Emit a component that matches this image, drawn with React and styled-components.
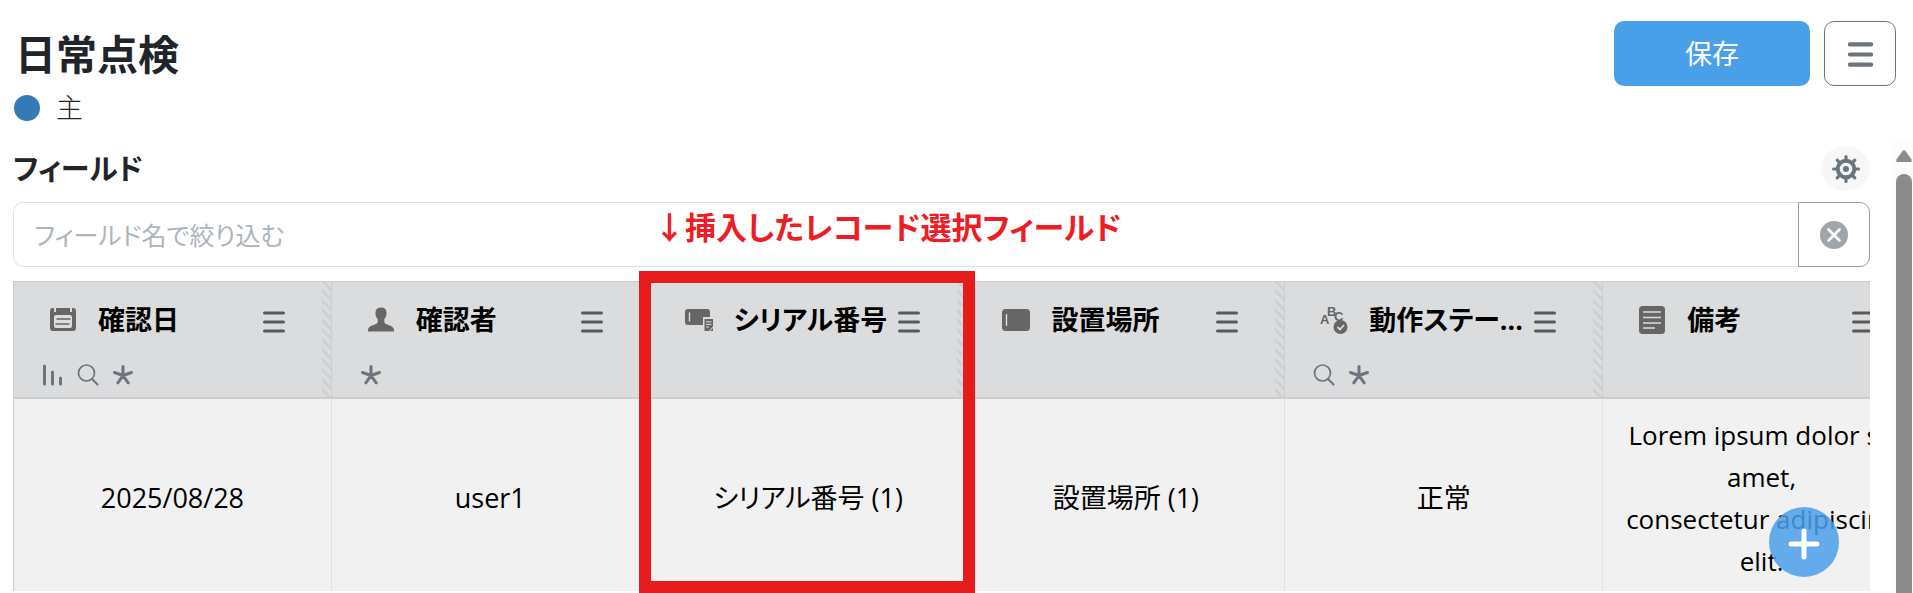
import React, { useState } from "react";
import styled, { createGlobalStyle } from "styled-components";

const GlobalStyle = createGlobalStyle`
  *{
    box-sizing: border-box;
  }
  body{
    margin: 0;
    background: #fff;
    color: #212529;
    font-family: "Open Sans", "Noto Sans CJK JP", sans-serif;
    font-size: 27px;
    line-height: 42px;
    font-feature-settings: "palt";
  }
  button, input{
    font: inherit;
    font-feature-settings: inherit;
  }
  svg{
    flex: none;
  }
`;

const MenuIcon = ({ size, stroke }) => (
  <svg width={size} height={size} viewBox="0 0 24 24" fill="none" stroke="currentColor" strokeWidth={stroke} strokeLinecap="round">
    <path d="M2.500 3h19M2.500 12h19M2.500 21h19" />
  </svg>
);

const GearIcon = () => (
  <svg width="28" height="28" viewBox="0 0 28 28" fill="none" stroke="currentColor" strokeLinecap="round">
    <circle cx="14" cy="14" r="8.300" strokeWidth="4" />
    <circle cx="14" cy="14" r="3" fill="currentColor" stroke="none" />
    <path strokeWidth="3.200" d="M14 1.600v4M14 22.400v4M1.600 14h4M22.400 14h4M5.200 5.200l2.600 2.600M20.200 20.200l2.600 2.600M5.200 22.800l2.600-2.600M20.200 7.800l2.600-2.600" />
  </svg>
);

const ClearIcon = () => (
  <svg width="28" height="28" viewBox="0 0 28 28">
    <circle cx="14" cy="14" r="14" fill="#a0a4ab" />
    <path d="M8.500 8.500l11 11M19.500 8.500l-11 11" stroke="#fff" strokeWidth="2.600" strokeLinecap="round" />
  </svg>
);

const PlusIcon = () => (
  <svg width="32" height="32" viewBox="0 0 32 32">
    <path d="M16 3v26M3 16h26" stroke="#fff" strokeWidth="5" strokeLinecap="round" />
  </svg>
);

/* field type icons */
const DateIcon = () => (
  <svg width="28" height="28" viewBox="0 0 28 28">
    <path fill="#666" d="M4 2h1v4h2V2h14v4h2V2h1a3 3 0 0 1 3 3v17a3 3 0 0 1-3 3H4a3 3 0 0 1-3-3V5a3 3 0 0 1 3-3z" />
    <rect x="5" y="9" width="18" height="13" rx="2" fill="#dbdcde" />
    <path d="M8 13h13M7 18h13" stroke="#666" strokeWidth="1.400" strokeLinecap="round" />
  </svg>
);

const UserIcon = () => (
  <svg width="28" height="28" viewBox="0 0 28 28">
    <path fill="#666" d="M14 1.500c3.500 0 5.400 2 5.400 4.500 0 1 .5 2-.1 3-.3 2-1 3-2 4v2.500c0 2 1.500 2.500 4 3.500 3.500 1 5.700 2.500 5.700 5v1.500H1V24c0-2.500 2.200-4 5.700-5 2.500-1 4-1.500 4-3.500V13c-1-1-1.700-2-2-4-.6-1-.1-2-.1-3 0-2.500 1.900-4.500 5.400-4.500z" />
  </svg>
);

const RecordIcon = () => (
  <svg width="28" height="28" viewBox="0 0 28 28">
    <path fill="#666" d="M3 3h19a3 3 0 0 1 3 3v5h-7v8H3a3 3 0 0 1-3-3V6a3 3 0 0 1 3-3z" />
    <path d="M4.500 6.500v9" stroke="#dbdcde" strokeWidth="1.400" />
    <path fill="#666" d="M19.500 13h8.500v7.500l-4 4.500h-4.500z" />
    <path d="M21 15.800h5.500M21 18.400h5.500M21 21h3" stroke="#dbdcde" strokeWidth="1" />
    <path fill="#666" d="M28 22v3h-3z" />
  </svg>
);

const TextIcon = () => (
  <svg width="28" height="28" viewBox="0 0 28 28">
    <rect y="3" width="28" height="22" rx="3.500" fill="#666" />
    <path d="M4.500 8v12" stroke="#dbdcde" strokeWidth="1.400" />
  </svg>
);

const ChoiceIcon = () => (
  <svg width="28" height="28" viewBox="0 0 28 28">
    <g fill="#666" fontFamily="Liberation Sans" fontWeight="700">
      <text x="0" y="18" fontSize="13">A</text>
      <text x="7" y="9.500" fontSize="13">B</text>
      <text x="14" y="14.500" fontSize="13">C</text>
    </g>
    <circle cx="20.500" cy="21" r="7" fill="#666" />
    <path d="M17.500 21l2.500 2.500 4-4.500" fill="none" stroke="#dbdcde" strokeWidth="1.800" />
  </svg>
);

const MemoIcon = () => (
  <svg width="28" height="28" viewBox="0 0 28 28">
    <rect x="1" width="26" height="28" rx="3.500" fill="#666" />
    <path d="M5 6h18M5 11.500h18M5 17h18M5 22h12" stroke="#dbdcde" strokeWidth="1.700" />
  </svg>
);

/* option icons under the field name */
const SortIcon = () => (
  <svg width="22" height="22" viewBox="0 0 22 22" stroke="currentColor" strokeWidth="3" strokeLinecap="round">
    <path d="M2.500 2v18M10.500 8v12M18.500 14v6" />
  </svg>
);

const SearchIcon = () => (
  <svg width="22" height="22" viewBox="0 0 22 22" fill="none" stroke="currentColor" strokeWidth="1.700" strokeLinecap="round">
    <circle cx="9.500" cy="9" r="8" />
    <path d="M15 15l5.500 5.500" strokeWidth="2" />
  </svg>
);

const RequiredIcon = () => (
  <svg width="22" height="22" viewBox="0 0 22 22" stroke="currentColor" strokeWidth="3" strokeLinecap="round">
    <path d="M11 11.500V2.500M11 11.500L2.500 8.500M11 11.500l8.500-3M11 11.500L5.800 18.800M11 11.500l5.200 7.300" />
  </svg>
);

const options = { sort: SortIcon, search: SearchIcon, required: RequiredIcon };

const fields = [
  { name: "確認日", icon: DateIcon, options: ["sort", "search", "required"], value: "2025/08/28" },
  { name: "確認者", icon: UserIcon, options: ["required"], value: "user1" },
  { name: "シリアル番号", icon: RecordIcon, options: [], value: "シリアル番号 (1)" },
  { name: "設置場所", icon: TextIcon, options: [], value: "設置場所 (1)" },
  { name: "動作ステー...", icon: ChoiceIcon, options: ["search", "required"], value: "正常" },
  { name: "備考", icon: MemoIcon, options: [], value: "Lorem ipsum dolor sit amet,\nconsectetur adipiscing elit.", memo: true },
];

const App = () => {
  const [keyword, setKeyword] = useState("");

  return (
    <Page>
      <GlobalStyle />
      <Header>
        <TitleBlock>
          <Title>日常点検</Title>
          <Status><Dot />主</Status>
        </TitleBlock>
        <SaveButton type="button">保存</SaveButton>
        <MenuButton type="button" aria-label="メニュー"><MenuIcon size={27} stroke={3.6} /></MenuButton>
      </Header>
      <Body>
        <Main>
          <SectionHead>
            <SectionTitle>フィールド</SectionTitle>
            <GearButton type="button" aria-label="設定"><GearIcon /></GearButton>
          </SectionHead>
          <SearchBar>
            <SearchInput
              type="text"
              aria-label="フィールド名で絞り込む"
              placeholder="フィールド名で絞り込む"
              value={keyword}
              onChange={(e) => setKeyword(e.target.value)}
            />
            <ClearButton type="button" aria-label="クリア" onClick={() => setKeyword("")}><ClearIcon /></ClearButton>
          </SearchBar>
          <TableArea>
            <Table>
              <thead>
                <tr>
                  {fields.map((field) => (
                    <HeadCell key={field.name}>
                      <HeadInner>
                        <FieldName>
                          <field.icon />
                          <span>{field.name}</span>
                          <FieldMenu type="button" aria-label="フィールドメニュー"><MenuIcon size={24} stroke={3} /></FieldMenu>
                        </FieldName>
                        <FieldOptions>
                          {field.options.map((key) => {
                            const Icon = options[key];
                            return <Icon key={key} />;
                          })}
                        </FieldOptions>
                        <ResizeHandle />
                      </HeadInner>
                    </HeadCell>
                  ))}
                </tr>
              </thead>
              <tbody>
                <tr>
                  {fields.map((field) => (
                    <Cell key={field.name} $memo={field.memo}>{field.value}</Cell>
                  ))}
                </tr>
              </tbody>
            </Table>
          </TableArea>
          <NoteText>↓挿入したレコード選択フィールド</NoteText>
          <NoteFrame />
          <AddButton type="button" aria-label="追加"><PlusIcon /></AddButton>
        </Main>
        <ScrollBar>
          <svg width="16" height="12" viewBox="0 0 16 12">
            <path fill="#8b8b8b" d="M6.500 1a2 2 0 0 1 3 0l6 8.500a1.600 1.600 0 0 1-1.300 2.500H1.800A1.600 1.600 0 0 1 .5 9.500z" />
          </svg>
          <ScrollThumb />
        </ScrollBar>
      </Body>
    </Page>
  );
};

export default App;

const Page = styled.div`
  display: flex;
  flex-direction: column;
  height: 100vh;
  overflow: hidden;
`;

const Header = styled.header`
  display: flex;
  align-items: flex-start;
  gap: 14px;
  padding: 21px 17px 13px 13px;
`;

const TitleBlock = styled.div`
  flex: 1;
  padding-top: 8px;
`;

const Title = styled.h1`
  margin: 0 0 8px;
  padding-left: 2px;
  font-size: 41px;
  font-weight: 700;
  line-height: 50px;
`;

const Status = styled.div`
  display: flex;
  align-items: center;
  gap: 16px;
  font-weight: 300;
`;

const Dot = styled.span`
  width: 26px;
  height: 26px;
  margin-left: 1px;
  border-radius: 50%;
  background: #337ab7;
`;

const SaveButton = styled.button`
  width: 196px;
  height: 65px;
  padding: 0;
  border: 0;
  border-radius: 10px;
  background: #4a9fe9;
  color: #fff;
`;

const MenuButton = styled.button`
  display: flex;
  align-items: center;
  justify-content: center;
  width: 72px;
  height: 65px;
  padding: 2px 0 0;
  border: 1px solid #6c757d;
  border-radius: 10px;
  background: #fff;
  color: #6c757d;
`;

const Body = styled.div`
  display: flex;
  flex: 1;
  min-height: 0;
`;

const Main = styled.main`
  position: relative;
  display: flex;
  flex-direction: column;
  flex: 1;
  min-width: 0;
  padding: 0 21px 2px 13px;
`;

const SectionHead = styled.div`
  display: flex;
  align-items: center;
  justify-content: space-between;
  flex: none;
  height: 60px;
  padding-bottom: 7px;
`;

const SectionTitle = styled.h2`
  margin: 0;
  font-size: 29px;
  font-weight: 700;
`;

const GearButton = styled.button`
  display: flex;
  align-items: center;
  justify-content: center;
  width: 49px;
  height: 45px;
  padding: 0;
  border: 0;
  border-radius: 50%;
  background: #f7f7f7;
  color: #6c757d;
`;

const SearchBar = styled.div`
  display: flex;
  flex: none;
  height: 65px;
  margin-bottom: 14px;
`;

const SearchInput = styled.input`
  flex: 1;
  min-width: 0;
  padding: 0 20px;
  border: 1px solid #dee2e6;
  border-right: 0;
  border-radius: 10px 0 0 10px;
  outline: none;
  font-size: 25px;
  &::placeholder{
    color: #adb5bd;
    opacity: 1;
  }
`;

const ClearButton = styled.button`
  display: flex;
  align-items: center;
  justify-content: center;
  width: 72px;
  padding: 0;
  border: 1px solid #9a9fa6;
  border-radius: 0 10px 10px 0;
  background: #fff;
`;

const TableArea = styled.div`
  flex: 1;
  min-height: 0;
  overflow: hidden;
  border-left: 1px solid #cbcdcf;
`;

const Table = styled.table`
  width: 1907px;
  table-layout: fixed;
  border-collapse: separate;
  border-spacing: 0;
  color: #000;
`;

const HeadCell = styled.th`
  padding: 0;
  border: solid #cbcdcf;
  border-width: 1px 1px 2px 0;
  background: #dbdcde;
  text-align: left;
`;

const HeadInner = styled.div`
  position: relative;
  height: 115px;
  padding-top: 17px;
`;

const FieldName = styled.div`
  display: flex;
  align-items: center;
  padding: 0 45px 0 35px;
  font-weight: 700;
  white-space: nowrap;
  span{
    flex: 1;
    min-width: 0;
    margin-left: 21px;
  }
`;

const FieldMenu = styled.button`
  display: flex;
  padding: 4px 0 0;
  border: 0;
  background: none;
  color: #58595b;
`;

const FieldOptions = styled.div`
  display: flex;
  gap: 13px;
  margin-top: 23px;
  padding-left: 28px;
  color: #6c757d;
`;

const ResizeHandle = styled.div`
  position: absolute;
  top: 0;
  right: 0;
  bottom: 0;
  width: 9px;
  background: repeating-linear-gradient(45deg, transparent 0 4px, #cfd0d2 4px 7px);
`;

const Cell = styled.td`
  padding: 15px 14px 16px;
  border-right: 1px solid #dee2e6;
  background: #f1f1f1;
  font-size: ${(props) => (props.$memo ? "26px" : "27px")};
  text-align: center;
  white-space: pre-line;
`;

const NoteText = styled.div`
  position: absolute;
  top: 60px;
  left: 654px;
  color: #ee1c25;
  font-size: 31px;
  font-weight: 700;
  line-height: 50px;
  white-space: nowrap;
  pointer-events: none;
`;

const NoteFrame = styled.div`
  position: absolute;
  top: 129px;
  left: 639px;
  bottom: 0;
  width: 336px;
  border: 12px solid #e61c1c;
  pointer-events: none;
`;

const AddButton = styled.button`
  position: absolute;
  right: 52px;
  bottom: 16px;
  display: flex;
  align-items: center;
  justify-content: center;
  width: 70px;
  height: 70px;
  padding: 4px 0 0;
  border: 0;
  border-radius: 50%;
  background: rgba(74, 159, 233, 0.85);
`;

const ScrollBar = styled.div`
  display: flex;
  flex-direction: column;
  gap: 12px;
  width: 22px;
  padding: 8px 1px 0 5px;
  background: #fcfcfc;
`;

const ScrollThumb = styled.div`
  flex: 1;
  border-radius: 8px 8px 0 0;
  background: #8b8b8b;
`;
